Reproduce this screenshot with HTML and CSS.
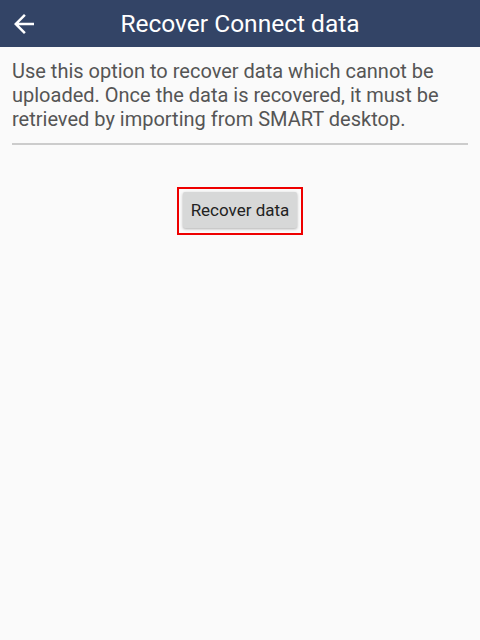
FILE: index.html
```html
<!DOCTYPE html>
<html>
<head>
<meta charset="utf-8">
<link rel="stylesheet" href="styles.css">
</head>
<body>
<header class="appbar">
  <span class="back">
    <svg width="30" height="30" viewBox="0 0 24 24"><path d="M20 11H7.83l5.59-5.59L12 4l-8 8 8 8 1.41-1.41L7.83 13H20v-2z" fill="#fff"/></svg>
  </span>
  <h1 class="title">Recover Connect data</h1>
</header>
<main class="content">
  <p class="desc">Use this option to recover data which cannot be uploaded. Once the data is recovered, it must be retrieved by importing from SMART desktop.</p>
  <hr class="divider">
  <div class="actions">
    <div class="focus">
      <button class="btn">Recover data</button>
    </div>
  </div>
</main>
</body>
</html>
```
FILE: styles.css
```css
html, body { margin: 0; padding: 0; }
body {
  background: #fafafa;
  font-family: Roboto, "Noto Sans", sans-serif;
  width: 480px;
  height: 640px;
}
.appbar {
  height: 47px;
  background: #334466;
  display: flex;
  align-items: center;
  justify-content: center;
  position: relative;
}
.back {
  position: absolute;
  left: 9px;
  top: 9px;
  width: 30px;
  height: 30px;
  display: flex;
}
.title {
  margin: 0;
  color: #fff;
  font-size: 24.5px;
  font-weight: 400;
  line-height: 47px;
}
.content {
  padding: 0 12px;
}
.desc {
  margin: 0;
  padding-top: 12px;
  font-size: 20px;
  line-height: 24px;
  color: #555555;
}
.divider {
  margin: 12px 0 0;
  border: 0;
  height: 2px;
  background: #cccccc;
}
.actions {
  display: flex;
  justify-content: center;
  padding-top: 42px;
}
.focus {
  border: 2px solid #ee0000;
  padding: 3px 4px 5px;
  display: flex;
}
.btn {
  font-family: Roboto, "Noto Sans", sans-serif;
  font-size: 17px;
  color: #222;
  background: #d7d8d8;
  border: 0;
  border-radius: 2px;
  height: 36px;
  padding: 0 8px;
  box-shadow: 0 1px 3px rgba(0,0,0,0.3);
}
```
